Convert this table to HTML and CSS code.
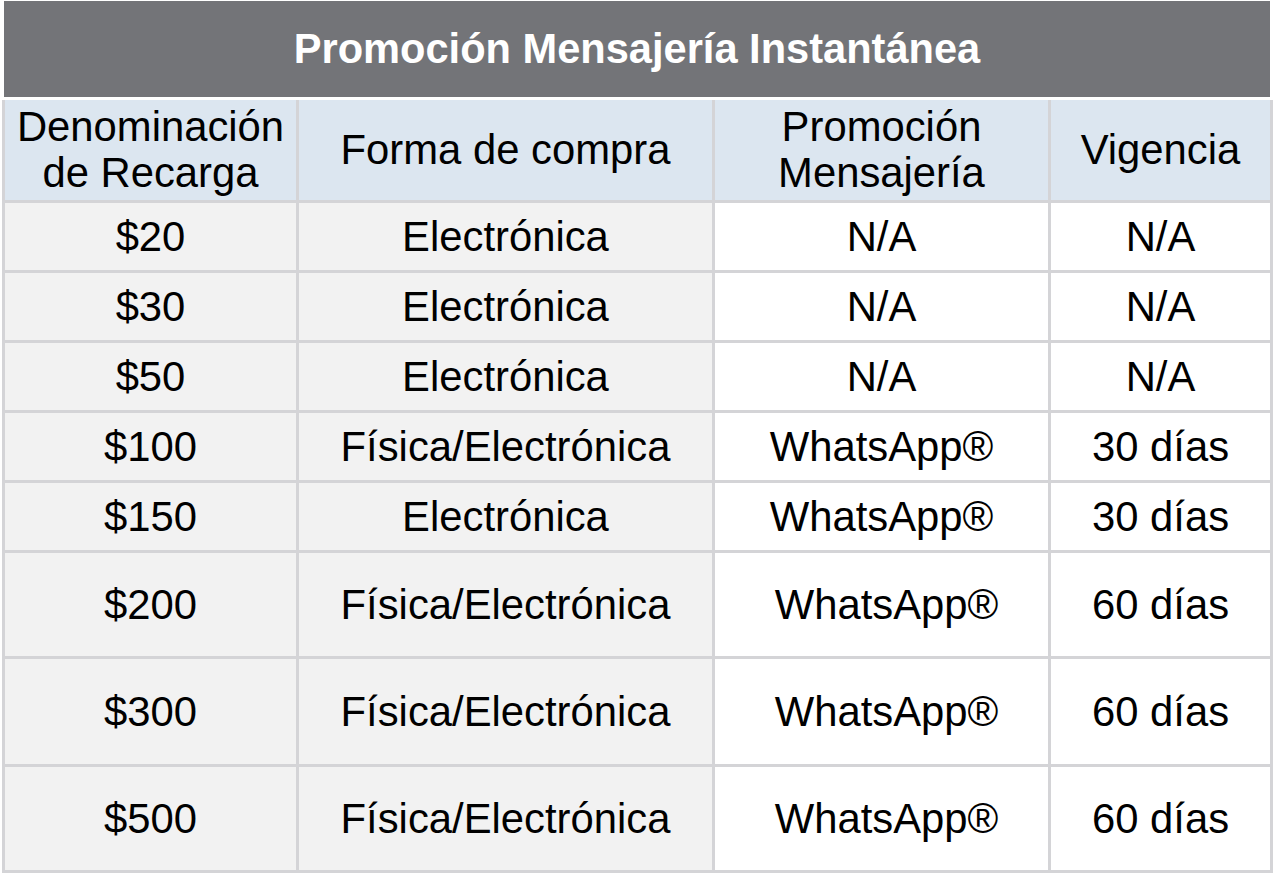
FILE: index.html
```html
<!DOCTYPE html>
<html lang="es">
<head>
<meta charset="utf-8">
<title>Promoción Mensajería Instantánea</title>
<link rel="stylesheet" href="styles.css">
</head>
<body>
<div class="page">
  <div class="title">Promoción Mensajería Instantánea</div>
  <div class="grid">
    <div class="cell head"><span class="txt">Denominación<br>de Recarga</span></div>
    <div class="cell head"><span class="txt">Forma de compra</span></div>
    <div class="cell head"><span class="txt">Promoción<br>Mensajería</span></div>
    <div class="cell head"><span class="txt">Vigencia</span></div>

    <div class="cell shade">$20</div>
    <div class="cell shade">Electrónica</div>
    <div class="cell">N/A</div>
    <div class="cell">N/A</div>

    <div class="cell shade">$30</div>
    <div class="cell shade">Electrónica</div>
    <div class="cell">N/A</div>
    <div class="cell">N/A</div>

    <div class="cell shade">$50</div>
    <div class="cell shade">Electrónica</div>
    <div class="cell">N/A</div>
    <div class="cell">N/A</div>

    <div class="cell shade">$100</div>
    <div class="cell shade">Física/Electrónica</div>
    <div class="cell">WhatsApp®</div>
    <div class="cell">30 días</div>

    <div class="cell shade">$150</div>
    <div class="cell shade">Electrónica</div>
    <div class="cell">WhatsApp®</div>
    <div class="cell">30 días</div>

    <div class="cell shade">$200</div>
    <div class="cell shade">Física/Electrónica</div>
    <div class="cell shift">WhatsApp®</div>
    <div class="cell">60 días</div>

    <div class="cell shade">$300</div>
    <div class="cell shade">Física/Electrónica</div>
    <div class="cell shift">WhatsApp®</div>
    <div class="cell">60 días</div>

    <div class="cell shade">$500</div>
    <div class="cell shade">Física/Electrónica</div>
    <div class="cell shift">WhatsApp®</div>
    <div class="cell">60 días</div>
  </div>
</div>
</body>
</html>
```

FILE: styles.css
```css
html, body {
  margin: 0;
  padding: 0;
  background: #ffffff;
}

.page {
  width: 1275px;
  padding-top: 1px;
  font-family: "Liberation Sans", Arial, sans-serif;
  color: #000000;
}

.title {
  margin: 0 5px 0 4px;
  height: 96px;
  background: #737478;
  color: #ffffff;
  font-weight: bold;
  font-size: 41.6px;
  display: flex;
  align-items: center;
  justify-content: center;
  border-bottom: 3px solid #ffffff;
}

.grid {
  margin-left: 2px;
  width: 1271px;
  box-sizing: border-box;
  display: grid;
  grid-template-columns: 291px 413px 333px 219px;
  grid-template-rows: 100px 67px 67px 67px 67px 67px 103px 105px 103px;
  gap: 3px;
  padding: 0 3px 3px 3px;
  background: #d4d4d7;
}

.cell {
  background: #ffffff;
  display: flex;
  align-items: center;
  justify-content: center;
  text-align: center;
  font-size: 41.8px;
  line-height: 46px;
  white-space: nowrap;
}

.txt {
  display: block;
}

.cell.head {
  background: #dce6f0;
}

.cell.shade {
  background: #f2f2f2;
}

.cell.shift {
  padding-left: 10px;
}
```
